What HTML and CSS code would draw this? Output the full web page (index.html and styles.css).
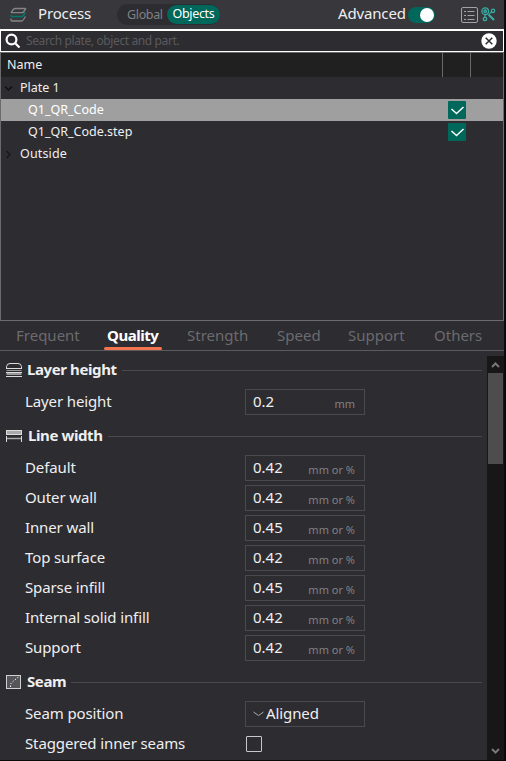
FILE: index.html
```
<!DOCTYPE html>
<html lang="en">
<head>
<meta charset="utf-8">
<title>Process</title>
<link rel="stylesheet" href="styles.css">
</head>
<body>
<div class="app">
  <header class="top">
    <svg class="layers" width="18" height="16" viewBox="0 0 18 16" fill="none" stroke-width="1.300"><path d="M5.500 1.500h9.500q1 0 .5.700l-2 2.800q-.5.700-1.500.7H2q-1 0-.5-.7l2-2.800q.7-.7 2-.7z" stroke="#858588"/><path d="M1 8v.5q0 1 1 1h9.500q1 0 1.700-1l2.300-3" stroke="#007a6c" stroke-width="1.500"/><path d="M1 11.500v1.500q0 1 1 1h9.500q1 0 1.700-1l2.300-3.500" stroke="#858588"/></svg>
    <h1 class="title">Process</h1>
    <div class="switch"><span class="off">Global</span><span class="on">Objects</span></div>
    <span class="advanced">Advanced</span>
    <span class="toggle"></span>
    <svg class="list" width="17" height="16" viewBox="0 0 17 16" fill="none" stroke="#a3a3a5"><rect x=".5" y=".5" width="16" height="15" rx="1.500"/><path d="M3 4.500h2M6.500 4.500h7M3 8.500h2M6.500 8.500h7M3 12.500h2M6.500 12.500h7"/></svg>
    <svg class="nodes" width="15" height="15" viewBox="0 0 15 15" fill="none" stroke="#3aada4" stroke-width="1.300"><circle cx="4.200" cy="4.200" r="3.300"/><circle cx="4.200" cy="4.200" r="1.200"/><circle cx="12" cy="3.800" r="1.700"/><circle cx="4" cy="12" r="1.700"/><path d="M10.700 5L8.500 6.500M4 8v2"/><path d="M7.500 7.500l5.500 5.500" stroke-width="2.200"/></svg>
  </header>
  <div class="search">
    <svg width="16" height="16" viewBox="0 0 16 16" fill="none" stroke="#fff" stroke-width="2.200"><circle cx="6.500" cy="6.500" r="4.900"/><path d="M10 10l4.500 4.500"/></svg>
    <span class="hint">Search plate, object and part.</span>
    <svg width="16" height="16" viewBox="0 0 16 16"><circle cx="8" cy="8" r="7.700" fill="#fff"/><path d="M4.700 4.700l6.600 6.600M11.300 4.700l-6.600 6.600" stroke="#2d2c31" stroke-width="1.500"/></svg>
  </div>
  <section class="tree">
    <div class="cols"><span class="name">Name</span><i></i><i></i></div>
    <div class="item"><svg class="arrow" width="9" height="9" viewBox="0 0 9 9"><path d="M1 2.500l3.500 3.500L8 2.500"/></svg><span>Plate 1</span></div>
    <div class="item child selected"><span>Q1_QR_Code</span><svg class="check" width="18" height="18" viewBox="0 0 18 18"><path d="M3.500 8l5 4.500L15.500 6"/></svg></div>
    <div class="item child"><span>Q1_QR_Code.step</span><svg class="check" width="18" height="18" viewBox="0 0 18 18"><path d="M3.500 8l5 4.500L15.500 6"/></svg></div>
    <div class="item"><svg class="arrow dim" width="9" height="9" viewBox="0 0 9 9"><path d="M2.500 1L6 4.500 2.500 8"/></svg><span class="outside">Outside</span></div>
  </section>
  <nav class="tabs"><span>Frequent</span><span><span class="active">Quality</span></span><span>Strength</span><span>Speed</span><span>Support</span><span>Others</span></nav>
  <main class="body">
    <div class="settings">
      <h2><svg width="16" height="16" viewBox="0 0 16 16" fill="none" stroke="#dcdcdc"><path d="M.5 6V4.500Q1 1.500 4 1.500h8q3 0 3.500 3V6"/><path d="M0 6.500h16"/><path d="M.5 8.500h15" stroke="#999"/><path d="M0 10.500h16"/><path d="M.5 12h15" stroke="#999" stroke-width="2"/><path d="M0 14.500h16"/></svg><span>Layer height</span></h2>
      <div class="row"><label>Layer height</label><div class="field"><b>0.2</b><small>mm</small></div></div>
      <h2><svg width="16" height="16" viewBox="0 0 16 16" fill="none" stroke="#dcdcdc"><rect x=".5" y="2.500" width="15" height="4" fill="#aaa"/><path d="M.5 8v6M15.500 8v6"/><path d="M1 10.500h14" stroke="#aaa" stroke-width="1.500"/></svg><span class="wide">Line width</span></h2>
      <div class="row"><label>Default</label><div class="field"><b>0.42</b><small>mm or %</small></div></div>
      <div class="row"><label>Outer wall</label><div class="field"><b>0.42</b><small>mm or %</small></div></div>
      <div class="row"><label>Inner wall</label><div class="field"><b>0.45</b><small>mm or %</small></div></div>
      <div class="row"><label>Top surface</label><div class="field"><b>0.42</b><small>mm or %</small></div></div>
      <div class="row"><label>Sparse infill</label><div class="field"><b>0.45</b><small>mm or %</small></div></div>
      <div class="row"><label>Internal solid infill</label><div class="field"><b>0.42</b><small>mm or %</small></div></div>
      <div class="row"><label>Support</label><div class="field"><b>0.42</b><small>mm or %</small></div></div>
      <h2><svg width="16" height="16" viewBox="0 0 16 16" fill="none"><rect x=".5" y="1.500" width="14" height="13" fill="#55555a" stroke="#d0d0d0"/><path d="M4.500 13v-3l3-3 5-4" stroke="#eee" stroke-dasharray="1.500 1.500"/></svg><span>Seam</span></h2>
      <div class="row"><label>Seam position</label><div class="field select"><svg width="11" height="6" viewBox="0 0 11 6"><path d="M.5 1l5 3.500 5-3.500" fill="none" stroke="#aaa"/></svg><b>Aligned</b></div></div>
      <div class="row"><label>Staggered inner seams</label><span class="box"></span></div>
    </div>
    <div class="scroll">
      <svg width="9" height="8" viewBox="0 0 9 8"><path d="M1 6l3.500-3.500L8 6"/></svg>
      <div class="thumb"></div>
      <svg class="down" width="9" height="8" viewBox="0 0 9 8"><path d="M1 2l3.500 3.500L8 2"/></svg>
    </div>
  </main>
</div>
</body>
</html>
```
FILE: styles.css
```
* { box-sizing: border-box; }
body { margin: 0; background: #0b0b0d; font-family: "Noto Sans", sans-serif; color: #efeff0; overflow: hidden; }
.app { width: 504px; height: 760px; background: #2d2c31; display: flex; flex-direction: column; white-space: nowrap; }
.top { height: 29px; flex: none; background: #38373c; display: flex; align-items: center; font-size: 15px; letter-spacing: -0.15px; padding: 0 8px 2px 10px; }
.title { width: 79px; margin: 0 0 2px 10px; font-size: 15px; font-weight: 400; line-height: 20px; }
.layers { margin-top: 3px; }
.switch { display: flex; align-items: center; width: 103px; height: 21px; margin-top: 2px; border-radius: 11px; background: #2d2c31; font-size: 12.5px; line-height: 18px; letter-spacing: -0.35px; }
.off { width: 50px; padding-left: 10px; color: #818183; }
.on { flex: 1; height: 19px; border-radius: 10px; background: #00675b; color: #fff; text-align: center; }
.advanced { margin: 0 0 2px auto; width: 70px; line-height: 20px; }
.toggle { width: 27px; height: 16px; margin-top: 2px; border-radius: 8px; background: #00675b; display: flex; justify-content: flex-end; padding: 1px; }
.toggle::after { content: ""; width: 14px; height: 14px; border-radius: 50%; background: #fff; }
.list { margin: 2px 3px 0 26px; }
.nodes { margin-top: 2px; }
.search { height: 23px; flex: none; border: 1px solid #fff; border-top-width: 2px; display: flex; align-items: center; padding: 0 6px 1px 4px; }
.hint { flex: 1; padding: 0 0 1px 5px; font-size: 12px; letter-spacing: -0.38px; color: #5a5a5d; }
.tree { height: 269px; flex: none; border: 1px solid #6b6b6e; font-size: 12.5px; }
.cols { display: flex; height: 24px; background: #202020; line-height: 23px; }
.name { flex: 1; padding-left: 6px; }
.cols i { width: 28px; border-left: 1px solid #6b6b6e; }
.cols i:last-child { width: 33px; }
.item { display: flex; align-items: center; height: 22px; line-height: 20px; padding-left: 3px; }
.arrow { margin-right: 7px; fill: none; stroke: #101012; stroke-width: 1.5; }
.dim { stroke: #19191b; }
.outside { letter-spacing: 0.15px; }
.child { padding-left: 27px; }
.selected { background: #9f9f9f; color: #fff; }
.check { margin: 0 37px 0 auto; background: #00675b; border-radius: 1px; fill: none; stroke: #fff; stroke-width: 1.5; }
.tabs { height: 30px; flex: none; display: grid; grid-template-columns: 91px 80px 90px 71px 86px 1fr; border-bottom: 1px solid #5c5b60; padding-left: 16px; font-size: 15px; line-height: 29px; color: #6b6b6e; }
.active { display: inline-block; position: relative; color: #fff; font-weight: 700; letter-spacing: -0.45px; }
.active::after { content: ""; position: absolute; left: -3px; right: -4px; bottom: 0; height: 3px; border-radius: 2px; background: #f4744f; }
.body { flex: 1; display: flex; min-height: 0; }
.settings { width: 482px; font-size: 15px; }
h2 { height: 36px; margin: 0; padding: 2px 0 0 6px; display: flex; align-items: center; gap: 5px; font-size: 15px; line-height: 20px; letter-spacing: -0.4px; }
h2 span { padding-bottom: 2px; }
.wide { padding-left: 1px; }
h2::after { content: ""; flex: 1; height: 1px; background: #4a494e; }
.row { display: flex; align-items: center; height: 30px; padding-left: 25px; }
label { width: 220px; line-height: 20px; letter-spacing: -0.12px; padding-bottom: 2px; }
.field { width: 120px; height: 26px; border: 1px solid #4a494e; display: flex; align-items: center; justify-content: space-between; padding: 0 9px 0 7px; }
.field b { font-weight: 400; line-height: 20px; padding-bottom: 2px; }
.field small { font-size: 11px; color: #818183; padding-top: 3px; }
.select { justify-content: flex-start; gap: 2px; letter-spacing: -0.1px; }
.box { width: 16px; height: 16px; border: 1px solid #c8c8c8; border-radius: 1px; margin-left: 1px; }
.scroll { width: 17px; margin: 5px 0 0 5px; background: #171717; display: flex; flex-direction: column; align-items: center; fill: none; stroke: #777; stroke-width: 2; padding: 5px 0; }
.thumb { width: 15px; height: 91px; background: #4d4d4d; margin-top: 4px; }
.down { margin-top: auto; }
```
